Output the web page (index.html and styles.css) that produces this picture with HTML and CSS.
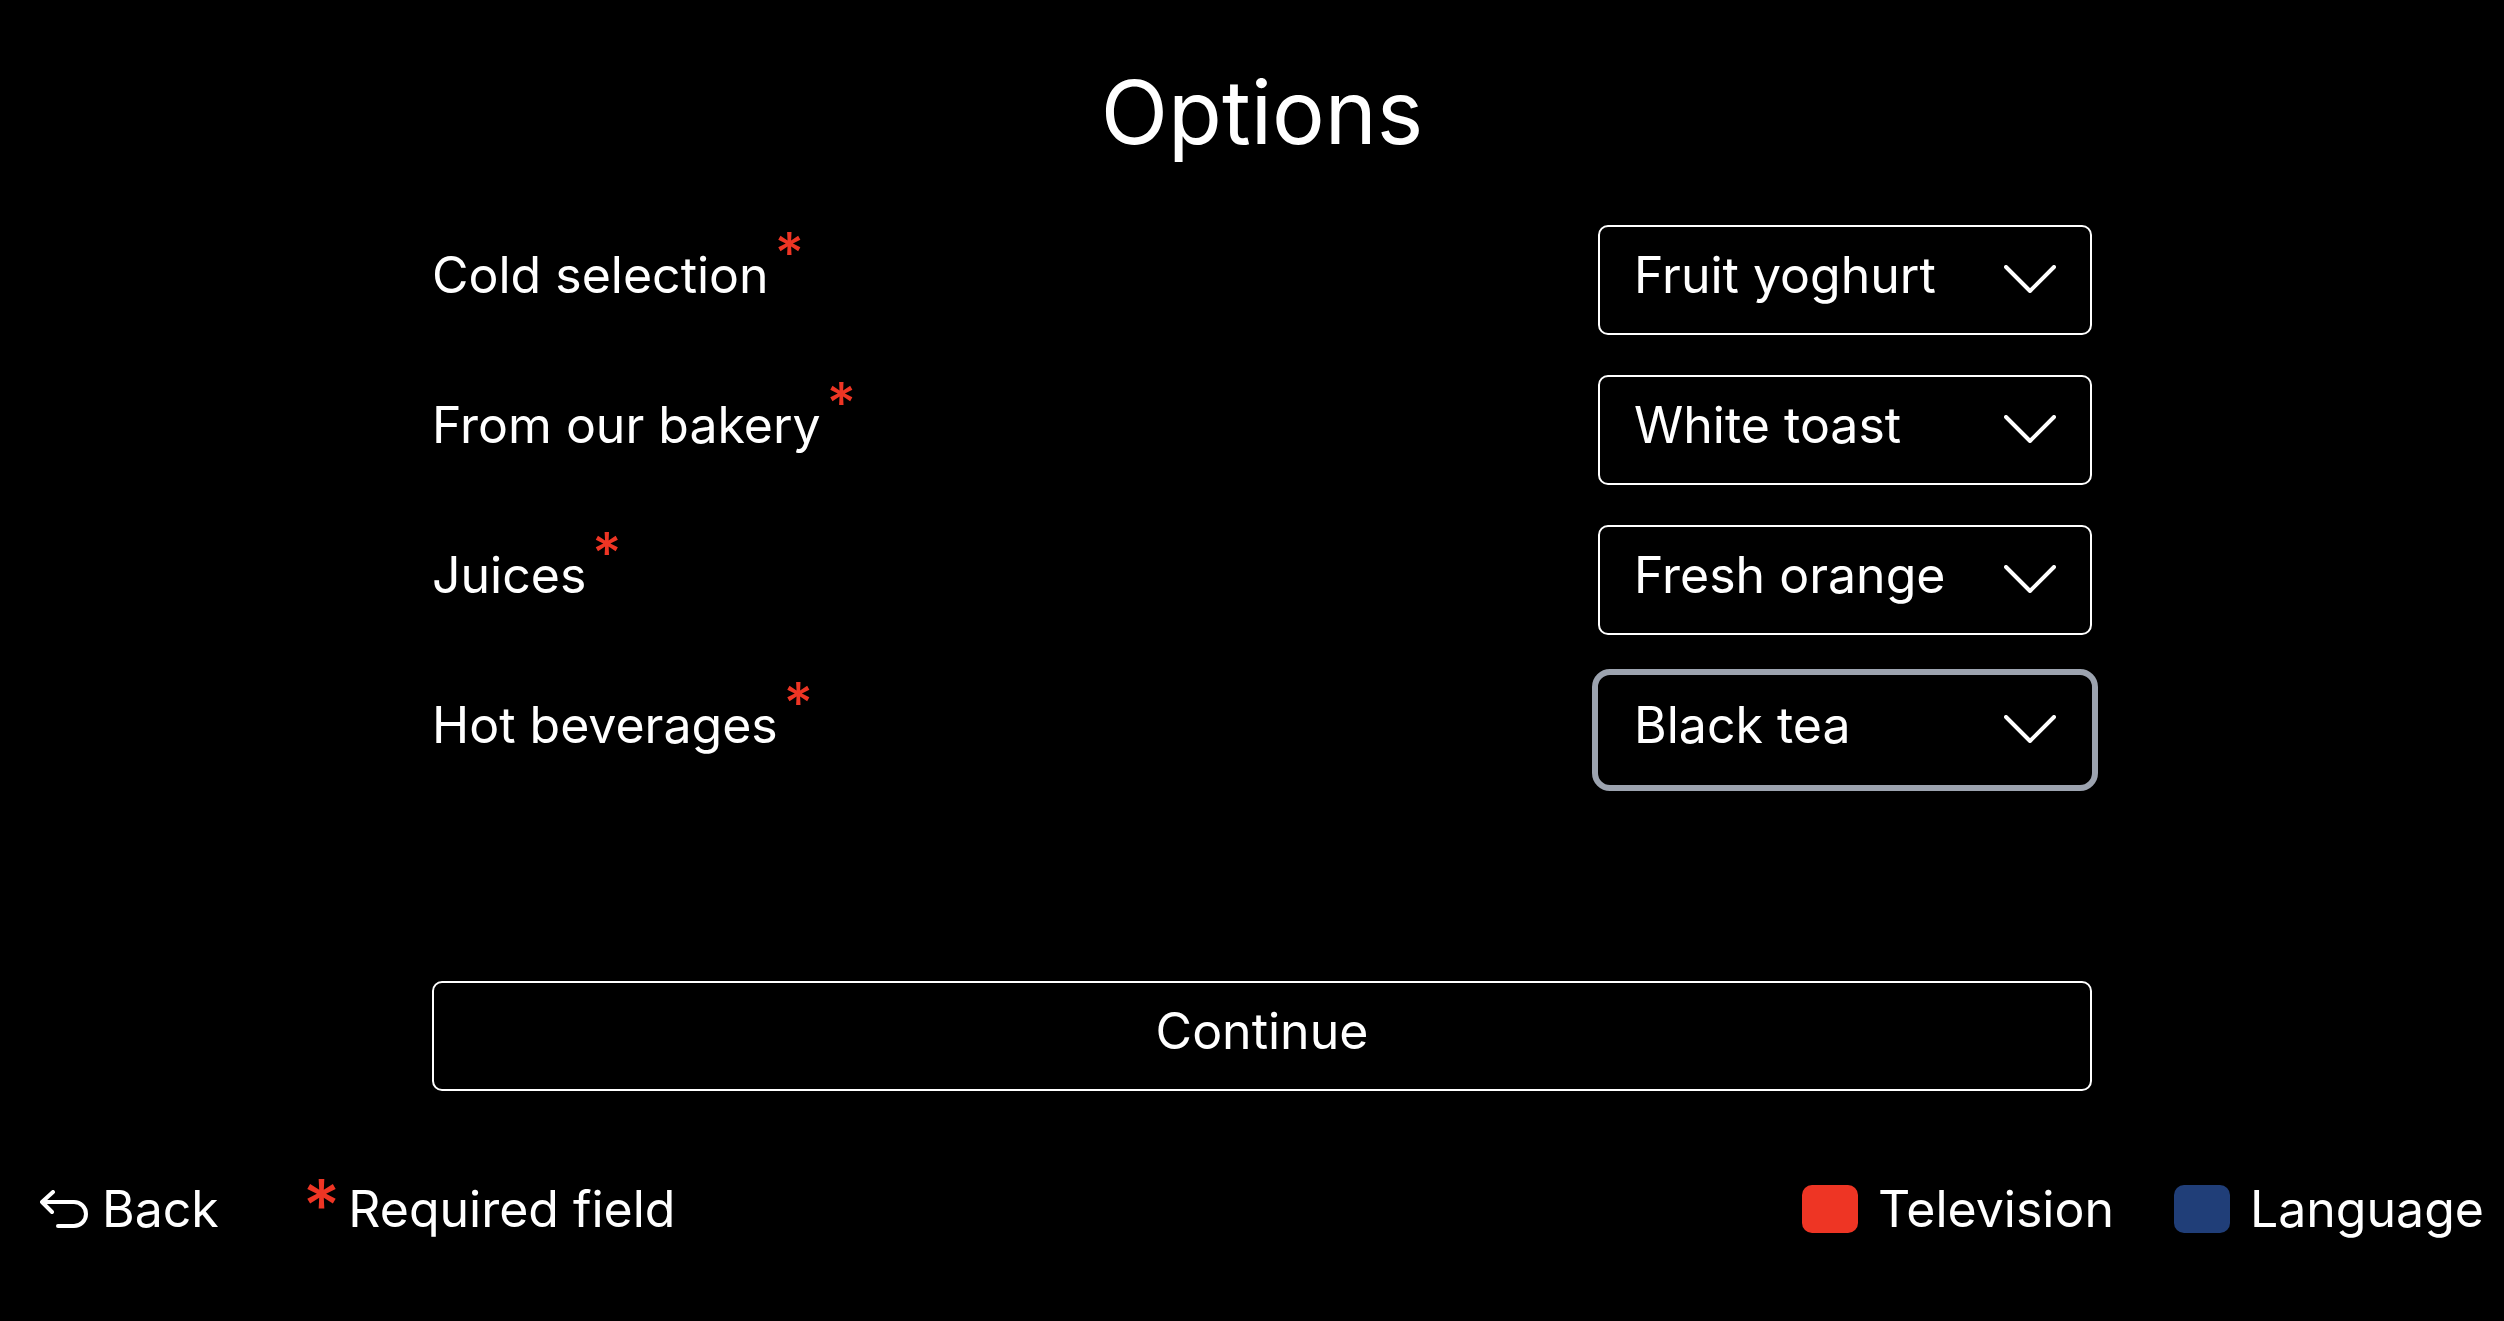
FILE: index.html
```html
<!DOCTYPE html>
<html lang="en">
<head>
<meta charset="utf-8">
<meta name="viewport" content="width=device-width, initial-scale=1">
<title>Options</title>
<link rel="stylesheet" href="styles.css">
</head>
<body>
<main class="page">
  <h1 class="title">Options</h1>
  <form class="options">
    <div class="row">
      <label class="label" for="cold">Cold selection<span class="star">*</span></label>
      <div class="picker">
        <select class="select" id="cold" required><option>Fruit yoghurt</option></select>
        <svg class="chevron" viewBox="0 0 52 28" aria-hidden="true"><path d="M2 2 26 26 50 2"/></svg>
      </div>
    </div>
    <div class="row">
      <label class="label" for="bakery">From our bakery<span class="star">*</span></label>
      <div class="picker">
        <select class="select" id="bakery" required><option>White toast</option></select>
        <svg class="chevron" viewBox="0 0 52 28" aria-hidden="true"><path d="M2 2 26 26 50 2"/></svg>
      </div>
    </div>
    <div class="row">
      <label class="label" for="juices">Juices<span class="star">*</span></label>
      <div class="picker">
        <select class="select" id="juices" required><option>Fresh orange</option></select>
        <svg class="chevron" viewBox="0 0 52 28" aria-hidden="true"><path d="M2 2 26 26 50 2"/></svg>
      </div>
    </div>
    <div class="row">
      <label class="label" for="hot">Hot beverages<span class="star">*</span></label>
      <div class="picker">
        <select class="select select-active" id="hot" required><option>Black tea</option></select>
        <svg class="chevron" viewBox="0 0 52 28" aria-hidden="true"><path d="M2 2 26 26 50 2"/></svg>
      </div>
    </div>
    <button class="continue" type="submit">Continue</button>
  </form>
</main>
<footer class="footer">
  <button class="key back" type="button">
    <svg class="back-icon" viewBox="0 0 48 38" aria-hidden="true"><path d="M13 2 2 12 12 22M2 12H34A12 12 0 0 1 34 36H18"/></svg>
    Back
  </button>
  <p class="note"><span class="star star-large">*</span>Required field</p>
  <div class="keys">
    <button class="key" type="button"><span class="swatch swatch-red"></span>Television</button>
    <button class="key" type="button"><span class="swatch swatch-blue"></span>Language</button>
  </div>
</footer>
</body>
</html>
```
FILE: styles.css
```css
* {
  box-sizing: border-box;
}

body {
  margin: 0;
  background: #000;
  color: #fff;
  font: 400 50px/60px Inter, "Open Sans", sans-serif;
}

.page {
  max-width: 1680px;
  margin: 0 auto;
  padding: 60px 0 0 20px;
}

.title {
  margin: 0 0 61px;
  font-size: 88px;
  line-height: 104px;
  font-weight: 400;
  text-align: center;
}

.options {
  display: flex;
  flex-direction: column;
  gap: 40px;
}

.row {
  display: flex;
  justify-content: space-between;
  align-items: flex-start;
}

.label {
  display: flex;
  gap: 6px;
  padding-top: 20px;
}

.star {
  margin-top: -8px;
  color: #ee3524;
  font-size: 56px;
  line-height: 32px;
  font-weight: 500;
}

.picker {
  position: relative;
  width: 494px;
}

.select {
  display: block;
  width: 100%;
  height: 110px;
  padding: 0 100px 10px 34px;
  border: 2px solid #fff;
  border-radius: 10px;
  background: #000;
  color: inherit;
  font: inherit;
  appearance: none;
}

.select-active {
  border-color: transparent;
  border-radius: 12px;
  outline: 6px solid #9ca3af;
}

.chevron {
  position: absolute;
  top: 40px;
  right: 36px;
  width: 52px;
  height: 28px;
  fill: none;
  stroke: #fff;
  stroke-width: 4;
  stroke-linecap: round;
  stroke-linejoin: round;
  pointer-events: none;
}

.continue {
  height: 110px;
  margin-top: 156px;
  padding: 0 0 10px;
  border: 2px solid #fff;
  border-radius: 10px;
  background: none;
  color: inherit;
  font: inherit;
}

.footer {
  display: flex;
  align-items: center;
  margin-top: 88px;
  padding: 0 20px 0 40px;
}

.key {
  display: flex;
  align-items: center;
  gap: 20px;
  padding: 0;
  border: 0;
  background: none;
  color: inherit;
  font: inherit;
}

.back {
  gap: 14px;
  margin-right: 84px;
}

.back-icon {
  width: 48px;
  height: 38px;
  fill: none;
  stroke: #fff;
  stroke-width: 4;
  stroke-linecap: round;
  stroke-linejoin: round;
}

.note {
  display: flex;
  gap: 8px;
  margin: 0;
}

.star-large {
  margin-top: 0;
  font-size: 72px;
  line-height: 52px;
}

.keys {
  display: flex;
  gap: 60px;
  margin-left: auto;
}

.swatch {
  width: 56px;
  height: 48px;
  border-radius: 10px;
}

.swatch-red {
  background: #ee3524;
}

.swatch-blue {
  background: #203e78;
}
```
